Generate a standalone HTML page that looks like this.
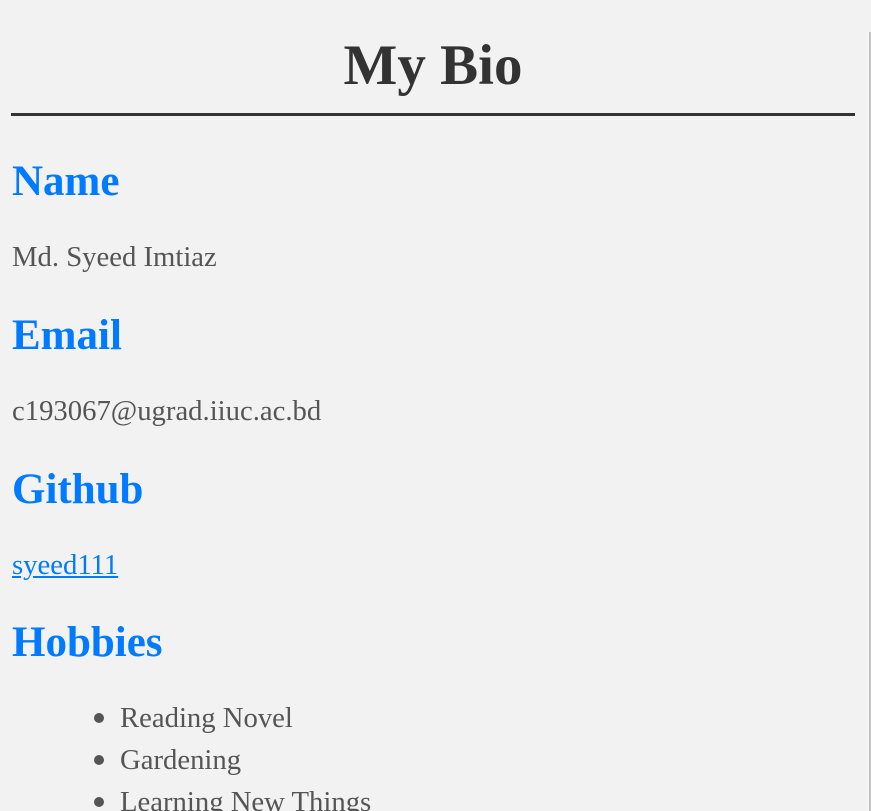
<!DOCTYPE html>
<html><head><meta charset="utf-8"><style>
html,body{margin:0;padding:0;background:#f2f2f2;width:871px;height:811px;overflow:hidden;position:relative;font-family:"Liberation Serif",serif}
.a{position:absolute;line-height:1;white-space:nowrap}
h1{margin:0;font-size:57px;color:#333;left:0;width:866px;text-align:center;top:37px}
.h{font-size:43px;font-weight:bold;color:#007bff;left:12px}
.t{font-size:28.7px;color:#555;left:12px}
.li{left:120px}
.li:before{content:"";position:absolute;left:-26px;top:9px;width:10px;height:10px;border-radius:50%;background:#555}
a{color:#007bff}
</style></head><body>
<div style="position:absolute;left:869px;top:32px;width:2px;height:779px;background:#c4c4c4"></div>
<h1 class="a">My Bio</h1>
<div style="position:absolute;left:11px;top:113px;width:844px;height:3px;background:#333"></div>
<div class="a h" style="top:160px">Name</div>
<div class="a t" style="top:243px">Md. Syeed Imtiaz</div>
<div class="a h" style="top:314px">Email</div>
<div class="a t" style="top:397px">c193067@ugrad.iiuc.ac.bd</div>
<div class="a h" style="top:468px">Github</div>
<div class="a t" style="top:551px"><a href="#">syeed111</a></div>
<div class="a h" style="top:621px">Hobbies</div>
<div class="a t li" style="top:704px">Reading Novel</div>
<div class="a t li" style="top:746px">Gardening</div>
<div class="a t li" style="top:788px">Learning New Things</div>
</body></html>
